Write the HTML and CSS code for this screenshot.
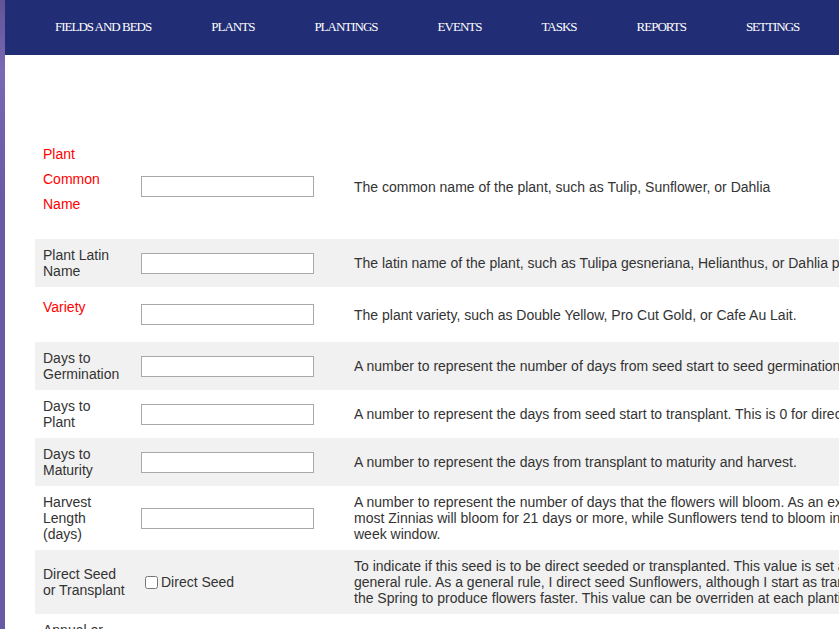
FILE: index.html
```html
<!DOCTYPE html>
<html lang="en">

<head>
  <meta charset="UTF-8" />
  <meta name="viewport" content="width=device-width, initial-scale=1.0" />
  <title>Add Plant</title>
  <link rel="stylesheet" href="styles.css">
</head>

<body>
  <div class="page">
    <nav class="topnav">
      <ul>
        <li><a href="#">Fields and Beds</a></li>
        <li><a href="#">Plants</a></li>
        <li><a href="#">Plantings</a></li>
        <li><a href="#">Events</a></li>
        <li><a href="#">Tasks</a></li>
        <li><a href="#">Reports</a></li>
        <li><a href="#">Settings</a></li>
      </ul>
    </nav>

    <form id="plant-form" class="plant-form">
      <table class="plant-table">
        <tr>
          <td class="label-cell"><label class="required" for="common-name">Plant Common Name</label></td>
          <td class="input-cell"><input type="text" id="common-name" /></td>
          <td class="desc-cell">The common name of the plant, such as Tulip, Sunflower, or Dahlia</td>
        </tr>
        <tr>
          <td class="label-cell"><label for="latin-name">Plant Latin Name</label></td>
          <td class="input-cell"><input type="text" id="latin-name" /></td>
          <td class="desc-cell">The latin name of the plant, such as Tulipa gesneriana, Helianthus, or Dahlia pinnata.</td>
        </tr>
        <tr>
          <td class="label-cell"><label class="required" for="variety">Variety</label></td>
          <td class="input-cell"><input type="text" id="variety" /></td>
          <td class="desc-cell">The plant variety, such as Double Yellow, Pro Cut Gold, or Cafe Au Lait.</td>
        </tr>
        <tr>
          <td class="label-cell"><label for="days-germ">Days to Germination</label></td>
          <td class="input-cell"><input type="text" id="days-germ" /></td>
          <td class="desc-cell">A number to represent the number of days from seed start to seed germination.</td>
        </tr>
        <tr>
          <td class="label-cell"><label for="days-plant">Days to Plant</label></td>
          <td class="input-cell"><input type="text" id="days-plant" /></td>
          <td class="desc-cell">A number to represent the days from seed start to transplant. This is 0 for direct sow.</td>
        </tr>
        <tr>
          <td class="label-cell"><label for="days-maturity">Days to Maturity</label></td>
          <td class="input-cell"><input type="text" id="days-maturity" /></td>
          <td class="desc-cell">A number to represent the days from transplant to maturity and harvest.</td>
        </tr>
        <tr>
          <td class="label-cell"><label for="harvest-length">Harvest Length (days)</label></td>
          <td class="input-cell"><input type="text" id="harvest-length" /></td>
          <td class="desc-cell">A number to represent the number of days that the flowers will bloom. As an example, most Zinnias will bloom for 21 days or more, while Sunflowers tend to bloom in a one week window.</td>
        </tr>
        <tr>
          <td class="label-cell"><label>Direct Seed or Transplant</label></td>
          <td class="input-cell">
            <input type="checkbox" id="direct-seed" /><label for="direct-seed">Direct Seed</label>
          </td>
          <td class="desc-cell">To indicate if this seed is to be direct seeded or transplanted. This value is set as the general rule. As a general rule, I direct seed Sunflowers, although I start as transplants in the Spring to produce flowers faster. This value can be overriden at each planting.</td>
        </tr>
        <tr>
          <td class="label-cell"><label>Annual or Perennial</label></td>
          <td class="input-cell">
            <input type="checkbox" id="perennial" /><label for="perennial">Perennial</label>
          </td>
          <td class="desc-cell">To indicate if this plant comes back each year.</td>
        </tr>
      </table>
    </form>
  </div>
</body>

</html>
```

FILE: styles.css
```css
html,
body {
  margin: 0;
  padding: 0;
  overflow: hidden;
}

body {
  background: linear-gradient(to bottom, #5f5495 0, #7a68b6 70px, #7060ae 130px, #6a5aa6 200px, #6a5aa6 100%);
  min-height: 100vh;
  font-family: "Liberation Sans", Arial, sans-serif;
  font-size: 14px;
  color: #333;
}

.page {
  margin-left: 5px;
  background-color: #fff;
  min-height: 100vh;
  width: 1100px;
}

.topnav {
  background-color: #212d75;
  height: 55px;
}

.topnav ul {
  list-style: none;
  margin: 0;
  padding: 0 0 0 20px;
  display: flex;
  height: 100%;
  align-items: center;
}

.topnav a {
  display: block;
  padding: 0 30px;
  color: #fff;
  text-decoration: none;
  text-transform: uppercase;
  font-family: "Liberation Serif", "Times New Roman", serif;
  font-size: 13px;
  letter-spacing: -1px;
  line-height: 14px;
  margin-top: -2px;
}

.plant-form {
  padding: 79px 0 0 30px;
}

.plant-table {
  border-collapse: collapse;
  border-spacing: 0;
  table-layout: fixed;
}

.plant-table tr:nth-child(even) {
  background-color: #f1f1f1;
}

.plant-table td {
  vertical-align: middle;
  line-height: 16px;
}

.label-cell {
  width: 82px;
  padding: 8px;
}

.input-cell {
  width: 197px;
  padding: 8px;
}

.desc-cell {
  width: 555px;
  padding: 8px;
}

label.required {
  display: block;
  color: #f00;
  line-height: 25px;
  margin-bottom: 14px;
}

input[type="text"] {
  display: block;
  width: 173px;
  height: 21px;
  box-sizing: border-box;
  border: 1px solid #a9a9a9;
  padding: 1px 2px;
  margin: 0;
  font-size: 13px;
}

input[type="checkbox"] {
  margin: 3px 3px 3px 4px;
  vertical-align: -2px;
}
```
